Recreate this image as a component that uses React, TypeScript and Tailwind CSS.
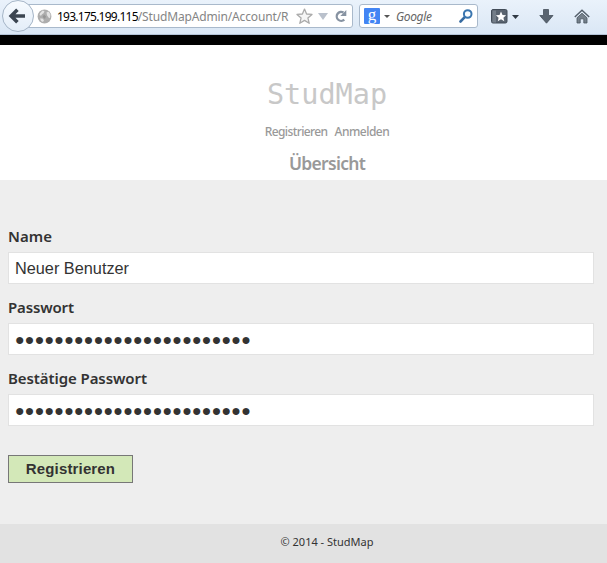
import React from "react";

const ui = "font-['Noto_Sans','Open_Sans',sans-serif]";

function BackButton() {
  return (
    <svg className="relative z-10 h-[34px] w-[36px] shrink-0" viewBox="0 0 36 34" aria-label="Back">
      <defs>
        <linearGradient id="back" x1="0" y1="0" x2="0" y2="1">
          <stop offset="0" stopColor="#f7fbff" />
          <stop offset="1" stopColor="#e3edf8" />
        </linearGradient>
      </defs>
      <circle cx="18" cy="16" r="15.5" fill="url(#back)" stroke="#a5b5c7" />
      <path d="M17.4 9.8 11.2 16l6.2 6.200M12 16h13" fill="none" stroke="#3b4551" strokeWidth="3.6" />
    </svg>
  );
}

function Globe() {
  return (
    <svg className="h-[15px] w-[15px] shrink-0" viewBox="0 0 15 15">
      <circle cx="7.5" cy="7.5" r="6.9" fill="#adadad" />
      <path d="M3 4.200 5.500 1.500l2 .7-1 2-1.500 1-1 1.500-1.500-.7zM9.500 3.500l2-1 2 3-.5 3.700-1.500-.7-1.500-2.300zM3 9.500l2.500 0 1.500 1.800-1 1.700-2-1z" fill="#e2e2e2" />
      <path d="M7 5.500l2 2-1 2.500L5.500 8z" fill="#959595" />
    </svg>
  );
}

function Star() {
  return (
    <svg className="h-[17px] w-[17px] shrink-0" viewBox="0 0 17 17">
      <path d="M8.500 1.100 10.600 6l5.400.4-4.100 3.500 1.300 5.400-4.700-2.900-4.700 2.900 1.300-5.400L1 6.400 6.400 6z" fill="#f5f5f5" stroke="#aaa" strokeWidth="1.300" strokeLinejoin="round" />
    </svg>
  );
}

function Reload() {
  return (
    <svg className="h-[14px] w-[14px] shrink-0" viewBox="0 0 14 14">
      <path d="M10.300 10.700A4.500 4.500 0 1 1 9.500 3.500" fill="none" stroke="#8793a2" strokeWidth="2.300" />
      <path d="M12.300 1v6H6.300z" fill="#8793a2" />
    </svg>
  );
}

function Magnifier() {
  return (
    <svg className="h-[14px] w-[14px] shrink-0" viewBox="0 0 14 14">
      <path d="m1.500 12.500 4.700-4.800" stroke="#376ba1" strokeWidth="2.600" strokeLinecap="round" />
      <circle cx="8.700" cy="5" r="3.800" fill="#f8fcff" stroke="#3975af" strokeWidth="2" />
    </svg>
  );
}

function Bookmarks() {
  return (
    <svg className="h-[15px] w-[17px] shrink-0" viewBox="0 0 17 15">
      <rect x=".5" y=".5" width="15.500" height="13.500" rx="1.500" fill="#59636f" stroke="#424c58" />
      <path d="M1.500 1.500H5v12H1.500z" fill="#747e89" />
      <path d="M10 2.600 11.500 6l3.600.3-2.700 2.400.9 3.600-3.300-2-3.200 2 .8-3.600-2.700-2.400 3.600-.3z" fill="#fff" />
    </svg>
  );
}

function DownArrow() {
  return (
    <svg className="h-[15px] w-[15px] shrink-0" viewBox="0 0 15 15">
      <path d="M4.500.5h5v6H14l-6.500 7.700L.8 6.500h3.700z" fill="#596470" stroke="#46505c" strokeWidth=".8" />
    </svg>
  );
}

function Home() {
  return (
    <svg className="h-[15px] w-[16px] shrink-0" viewBox="0 0 16 15">
      <path d="m.8 8 7.200-6.700L15.200 8" fill="none" stroke="#535e6a" strokeWidth="1.500" />
      <path d="M3 8.800 8 4.200l5 4.600V14H9.800V9.800H6.200V14H3z" fill="#75808b" stroke="#4a5561" strokeWidth=".8" />
    </svg>
  );
}

function Caret({ className }: { className: string }) {
  return (
    <svg className={className} viewBox="0 0 8 5" preserveAspectRatio="none">
      <path d="M0 0h8L4 5z" fill="currentColor" />
    </svg>
  );
}

function Toolbar() {
  return (
    <header className={`flex h-[35px] items-start border-b border-[#b3c3d7] bg-gradient-to-b from-[#eaf2fb] to-[#dae7f5] ${ui}`}>
      <BackButton />
      <div className="-ml-[9px] mt-1 flex h-6 w-[326px] shrink-0 items-center rounded-r-[3px] border border-[#a9b9cb] bg-white pl-[9px] text-[12px] text-[#858585]">
        <Globe />
        <span className="ml-[5px] w-[236px] overflow-hidden whitespace-nowrap pt-px tracking-[-0.15px]">
          <span className="tracking-[-0.75px] text-black">193.175.199.115</span>/StudMapAdmin/Account/R
        </span>
        <span className="ml-[3px]"><Star /></span>
        <Caret className="ml-[5px] h-[7px] w-[10px] shrink-0 text-[#bac1cc]" />
        <span className="ml-[6px]"><Reload /></span>
      </div>
      <div className="ml-[6px] mt-1 flex h-6 w-[119px] shrink-0 items-center rounded-[3px] border border-[#a9b9cb] bg-white pl-1">
        <span className="flex h-4 w-4 items-center justify-center rounded-[1px] bg-[#4285f4] pb-1 font-['Liberation_Serif',serif] text-[17px] leading-none text-white">g</span>
        <Caret className="ml-[4px] h-[3px] w-[6px] text-[#555]" />
        <span className="ml-[6px] w-[55px] pt-px text-[12px] italic tracking-[-0.35px] text-[#666]">Google</span>
        <span className="ml-[8px]"><Magnifier /></span>
      </div>
      <div className="ml-[13px] mt-[9px] flex items-center">
        <Bookmarks />
        <Caret className="ml-[4px] h-1 w-[7px] text-[#303944]" />
        <span className="ml-[20px]"><DownArrow /></span>
        <span className="ml-[20px]"><Home /></span>
      </div>
    </header>
  );
}

function Field({ label, value, labelClass, valueClass }: { label: string; value: string; labelClass: string; valueClass: string }) {
  return (
    <div className="mb-[7px]">
      <div className={`h-8 text-[15px] font-semibold leading-[32px] ${labelClass}`}>{label}</div>
      <div className={`flex h-8 w-[586px] items-center border border-[#e2e2e2] bg-white pl-[6px] font-['Liberation_Sans',sans-serif] ${valueClass}`}>
        {value}
      </div>
    </div>
  );
}

export default function App() {
  const password = "●".repeat(24);
  return (
    <div className={`flex h-[563px] w-[607px] flex-col overflow-hidden bg-[#eee] text-[#333] ${ui}`}>
      <Toolbar />
      <div className="h-[10px] shrink-0 bg-black" />
      <div className="flex h-[135px] shrink-0 flex-col items-center bg-white pl-[47px] text-[#999]">
        <h1 className="mt-[31px] h-[38px] font-['DejaVu_Sans_Mono',monospace] text-[28.5px] leading-[38px] text-[#c8c8c8]">StudMap</h1>
        <nav className="mt-[8px] flex h-5 gap-[7px] text-[12px] font-medium leading-5">
          <a className="tracking-[-0.6px]">Registrieren</a>
          <a className="tracking-[-0.5px]">Anmelden</a>
        </nav>
        <div className="mt-[9px] h-6 text-[17.5px] font-semibold leading-6 tracking-[-0.7px]">Übersicht</div>
      </div>
      <main className="h-[344px] shrink-0 pl-2 pt-[40px]">
        <Field label="Name" value="Neuer Benutzer" labelClass="tracking-[0.1px]" valueClass="text-[16.3px] [&>div]:pt-px" />
        <Field label="Passwort" value={password} labelClass="tracking-[-0.15px]" valueClass="text-[16.3px]" />
        <Field label="Bestätige Passwort" value={password} labelClass="tracking-[-0.08px]" valueClass="text-[16.3px]" />
        <button className="mt-[29px] block h-7 w-[125px] border border-[#777] bg-[#d3e8b8] font-['Liberation_Sans',sans-serif] text-[15px] font-bold leading-[26px] tracking-[0.15px]">Registrieren</button>
      </main>
      <footer className="h-[39px] shrink-0 bg-[#e2e2e2] pl-[47px] text-center text-[11px] leading-[36px]">© 2014 - StudMap</footer>
    </div>
  );
}
